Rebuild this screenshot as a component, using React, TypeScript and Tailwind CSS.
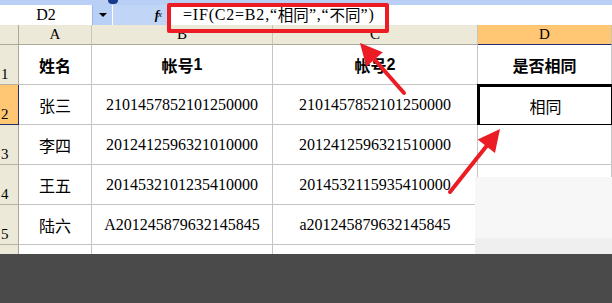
const cols = ['A', 'B', 'C', 'D'];

const rows: { n: string; name: string; a1: string; a2: string; same: string }[] = [
  { n: '2', name: '张三', a1: '2101457852101250000', a2: '2101457852101250000', same: '相同' },
  { n: '3', name: '李四', a1: '2012412596321010000', a2: '2012412596321510000', same: '' },
  { n: '4', name: '王五', a1: '2014532101235410000', a2: '2014532115935410000', same: '' },
  { n: '5', name: '陆六', a1: 'A201245879632145845', a2: 'a201245879632145845', same: '' },
];

const cjk = 'font-["Noto_Sans_CJK_SC",sans-serif]';
const serif = 'font-["Liberation_Serif",serif]';
const num = `${serif} text-[16px] leading-none`;
const fx = `${serif} text-[16px] leading-none tracking-[0.8px]`;
const cell = 'flex items-center justify-center border-r border-b border-[#c4c4c4] bg-white text-black';

function RowHead({ n, active }: { n: string; active?: boolean }) {
  return (
    <div
      className={`flex items-end pl-px pb-0.5 text-[15px] leading-none text-black border-b ${serif} ${
        active ? 'bg-[#ffc774] border-[#1f2f6e] border-r' : 'bg-[#ece9d8] border-[#b5b2a3] border-r border-r-[#aca899]'
      }`}
    >
      {n}
    </div>
  );
}

function Arrow({ x1, y1, x2, y2 }: { x1: number; y1: number; x2: number; y2: number }) {
  const dx = x2 - x1;
  const dy = y2 - y1;
  const len = Math.hypot(dx, dy);
  const ux = dx / len;
  const uy = dy / len;
  const hl = 22;
  const hw = 11;
  const bx = x2 - ux * hl;
  const by = y2 - uy * hl;
  const px = -uy;
  const py = ux;
  return (
    <g>
      <line x1={x1} y1={y1} x2={bx + ux * 2} y2={by + uy * 2} stroke="#ec1c24" strokeWidth={4} strokeLinecap="round" />
      <polygon
        points={`${x2},${y2} ${bx + px * hw},${by + py * hw} ${bx - px * hw},${by - py * hw}`}
        fill="#ec1c24"
      />
    </g>
  );
}

export default function App() {
  return (
    <div className="relative h-[303px] w-[612px] overflow-hidden bg-[#4a4a4a]">
      {/* toolbar remnant */}
      <div className="flex h-[5px] bg-[#b9cff5]">
        <div className="ml-[108px] h-[4px] w-[10px] rounded-b-sm bg-[#1c3a8c]" />
      </div>

      {/* formula bar */}
      <div className="flex h-[20px] bg-[#c1d5f7]">
        <div className={`flex w-[92px] items-center justify-center bg-white text-[16px] text-black ${serif}`}>D2</div>
        <div className="flex w-[20px] items-center justify-center border-l border-[#9db6e4] bg-[#b8cff6]">
          <div className="h-0 w-0 border-x-[4px] border-t-[4px] border-x-transparent border-t-black" />
        </div>
        <div className="w-px bg-white" />
        <div className="flex w-[57px] items-center justify-end pr-2 text-[13px] italic text-black font-['Liberation_Serif',serif]">
          <span className="font-bold">f</span>
          <span className="-ml-px text-[9px]">x</span>
        </div>
        <div className="flex flex-1 items-center bg-white pl-[13px] text-black">
          <span className={fx}>=IF(C2=B2,“</span>
          <span className={`${cjk} text-[15.5px] leading-none`}>相同</span>
          <span className={fx}>”,“</span>
          <span className={`${cjk} text-[15.5px] leading-none`}>不同</span>
          <span className={fx}>”)</span>
        </div>
      </div>

      {/* sheet */}
      <div className="grid grid-cols-[19px_73px_181px_205px_134px] grid-rows-[20px_40px_40px_40px_40px_40px_9px] bg-white">
        <div className="border-r border-b border-[#aca899] bg-[#ece9d8]" />
        {cols.map((c) => (
          <div
            key={c}
            className={`flex items-center justify-center border-r border-b text-[15px] leading-none text-black ${serif} ${
              c === 'D' ? 'bg-[#ffc774] border-b-[#1f2f6e] border-r-[#c9c6b6]' : 'bg-[#ece9d8] border-[#c9c6b6] border-b-[#aca899]'
            }`}
          >
            {c}
          </div>
        ))}

        <RowHead n="1" />
        <div className={`${cell} ${cjk} text-[16px] font-bold`}>姓名</div>
        <div className={`${cell} ${cjk} text-[16px] font-bold`}>
          帐号<span className="font-['Liberation_Sans',sans-serif]">1</span>
        </div>
        <div className={`${cell} ${cjk} text-[16px] font-bold`}>
          帐号<span className="font-['Liberation_Sans',sans-serif]">2</span>
        </div>
        <div className={`${cell} ${cjk} text-[16px] font-bold`}>是否相同</div>

        {rows.map((r) => (
          <div key={r.n} className="contents">
            <RowHead n={r.n} active={r.n === '2'} />
            <div className={`${cell} ${cjk} text-[16px]`}>{r.name}</div>
            <div className={`${cell} ${num}`}>{r.a1}</div>
            <div className={`${cell} ${num}`}>{r.a2}</div>
            <div
              className={`${cell} ${cjk} text-[16px] ${
                r.n === '2' ? 'border-[3px] border-black -ml-px -mt-px' : ''
              }`}
            >
              {r.same}
            </div>
          </div>
        ))}

        <div className="border-r border-[#aca899] bg-[#ece9d8]" />
        <div className="border-r border-[#c4c4c4]" />
        <div className="border-r border-[#c4c4c4]" />
        <div className="border-r border-[#c4c4c4]" />
        <div />
      </div>

      {/* blurred patch */}
      <div className="absolute left-[475px] top-[177px] flex h-[77px] w-[137px] flex-col bg-[#f7f7f7]">
        <div className="flex-1" />
        <div className="h-[16px] bg-[#efefef]" />
      </div>

      {/* annotations */}
      <div className="absolute left-[167px] top-[3px] h-[30px] w-[222px] rounded-[2px] border-4 border-[#ec1c24]" />
      <svg className="absolute inset-0" width={612} height={303}>
        <Arrow x1={404} y1={93} x2={360} y2={43} />
        <Arrow x1={450} y1={192} x2={500} y2={129} />
      </svg>
    </div>
  );
}
